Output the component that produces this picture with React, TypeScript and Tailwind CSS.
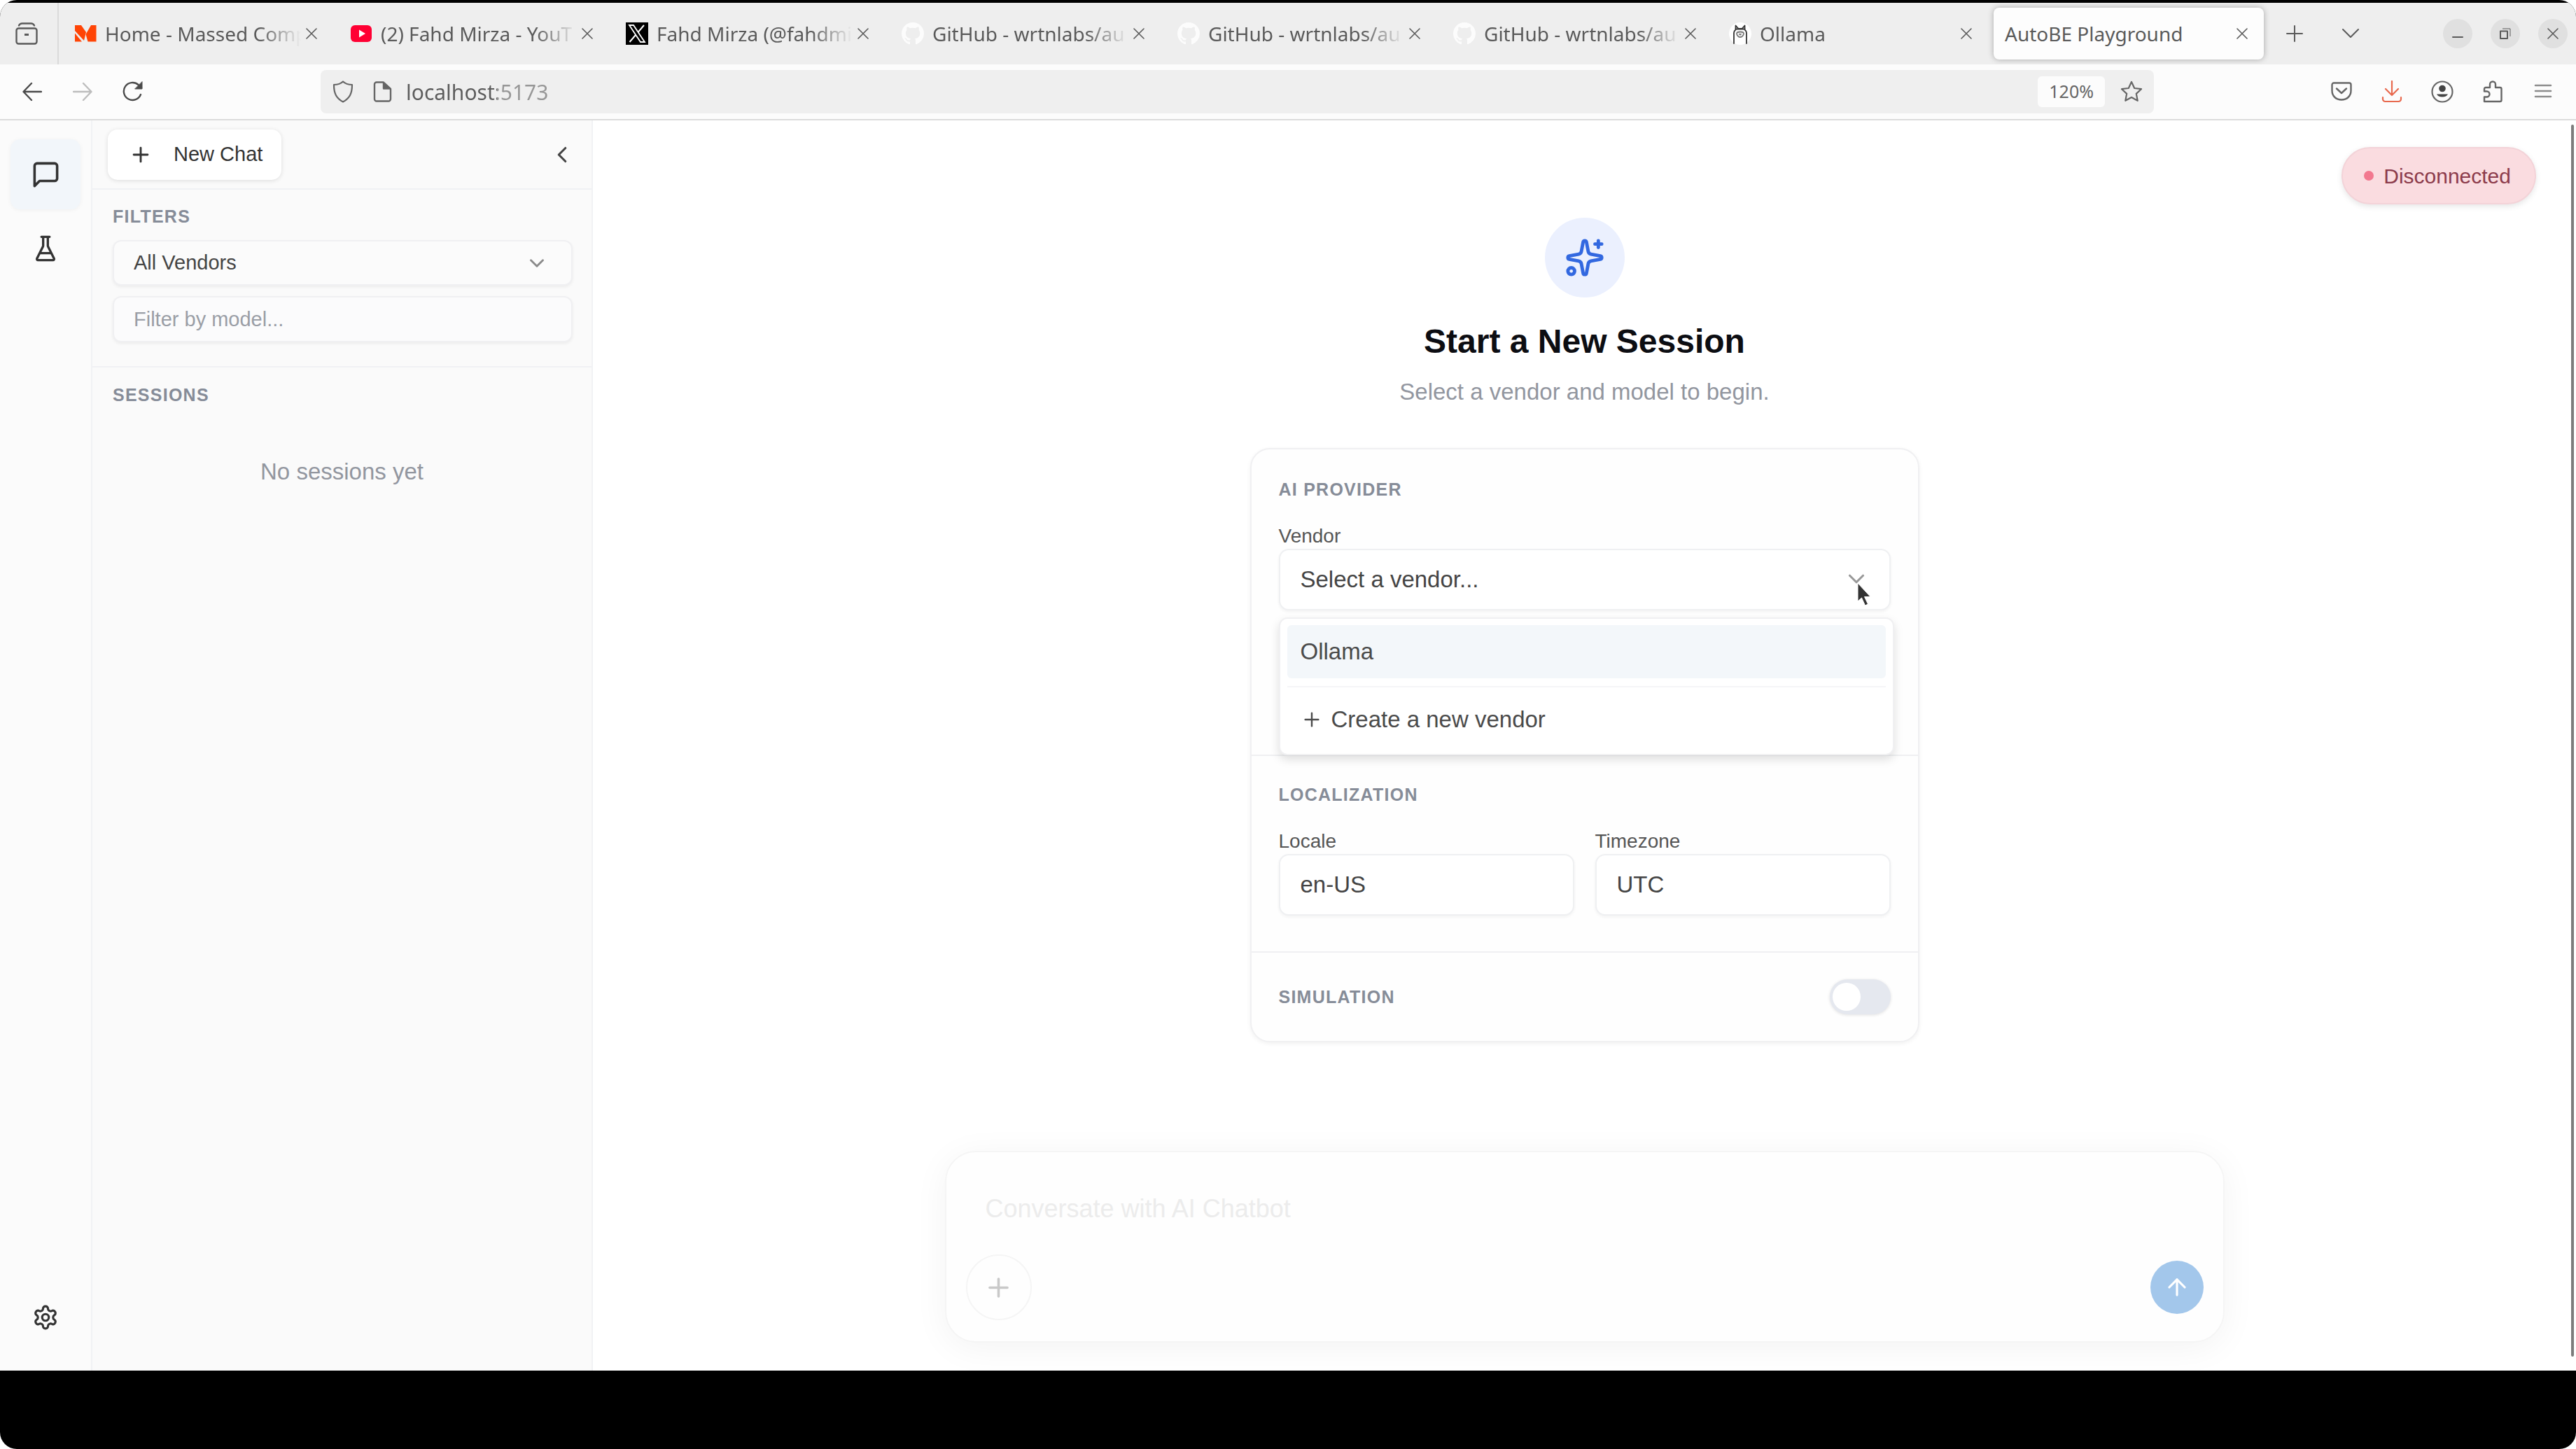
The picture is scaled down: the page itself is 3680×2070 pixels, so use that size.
import React, { useState } from "react";
import { ArrowUp, ChevronDown, ChevronLeft, Plus, Sparkles } from "lucide-react";

type IconProps = { className?: string };

const stroke = {
  fill: "none",
  stroke: "currentColor",
  strokeWidth: 2,
  strokeLinecap: "round" as const,
  strokeLinejoin: "round" as const,
};

function CloseIcon({ className = "" }: IconProps) {
  return (
    <svg viewBox="0 0 16 16" className={className} aria-hidden="true" {...stroke} strokeWidth={1.6}>
      <path d="M1 1l14 14M15 1L1 15" />
    </svg>
  );
}

function RecentIcon({ className = "" }: IconProps) {
  return (
    <svg viewBox="0 0 32 32" className={className} aria-hidden="true" {...stroke} strokeWidth={2.4}>
      <rect x="1.5" y="8.5" width="29" height="22" rx="3" />
      <path d="M5 4.500C6 2.500 7.500 1.500 9.500 1.500h13c2 0 3.500 1 4.500 3" />
      <path d="M13 17.500h6" strokeLinecap="butt" strokeWidth={3} />
    </svg>
  );
}

function MassedIcon({ className = "" }: IconProps) {
  return (
    <svg viewBox="0 0 32 24" className={className} aria-hidden="true" fill="#ff4405">
      <path d="M1 0h9l7 10-3 12L1 8z" />
      <path d="M1 11.500L11 23.500H1z" />
      <path d="M24 0h7.500v23.500H19.500L16.500 13z" />
    </svg>
  );
}

function YouTubeIcon({ className = "" }: IconProps) {
  return (
    <svg viewBox="0 0 32 24" className={className} aria-hidden="true">
      <rect x="1" y="0" width="30" height="24" rx="6" fill="#ff0033" />
      <path d="M13 6.500l9 5.500-9 5.500z" fill="#fff" />
    </svg>
  );
}

function XIcon({ className = "" }: IconProps) {
  return (
    <svg viewBox="0 0 32 32" className={className} aria-hidden="true">
      <rect width="32" height="32" fill="#000" />
      <path d="M5 4h6l16 24h-6z" fill="none" stroke="#fff" strokeWidth="1.800" />
      <path d="M26 4L17.500 14M14 18L5.500 28" stroke="#fff" strokeWidth="2" />
    </svg>
  );
}

function GitHubIcon({ className = "" }: IconProps) {
  return (
    <svg viewBox="0 0 16 16" className={className} aria-hidden="true">
      <path
        fill="#fcfcfc"
        d="M8 0C3.580 0 0 3.580 0 8c0 3.540 2.290 6.530 5.470 7.590.4.070.55-.17.55-.38 0-.19-.010-.82-.010-1.490-2.010.37-2.530-.49-2.690-.94-.09-.23-.48-.94-.82-1.130-.28-.15-.68-.52-.010-.53.63-.010 1.080.58 1.230.82.72 1.210 1.870.87 2.330.66.070-.52.28-.87.51-1.070-1.780-.2-3.640-.89-3.640-3.950 0-.87.31-1.590.82-2.150-.080-.2-.36-1.020.080-2.120 0 0 .67-.21 2.200.82.64-.18 1.320-.27 2-.27s1.360.09 2 .27c1.530-1.040 2.200-.82 2.200-.82.44 1.100.16 1.920.080 2.120.51.56.82 1.270.82 2.150 0 3.070-1.870 3.750-3.650 3.950.29.25.54.73.54 1.480 0 1.070-.010 1.930-.010 2.200 0 .21.15.46.55.38A8.010 8.010 0 0 0 16 8c0-4.420-3.580-8-8-8z"
      />
    </svg>
  );
}

function OllamaIcon({ className = "" }: IconProps) {
  return (
    <svg viewBox="0 0 32 32" className={className} aria-hidden="true">
      <circle cx="16" cy="16" r="16" fill="#fff" />
      <g fill="none" stroke="#333" strokeWidth="1.800" strokeLinecap="round" strokeLinejoin="round">
        <path d="M7 30V15c0-2 1-3.500 2.500-4.500V4.500l4 4.500h5l4-4.500v6C24 11.500 25 13 25 15v15" />
        <path d="M9.500 9.500h13" />
        <path d="M11 16c0-1.500 2-2.500 5-2.500s5 1 5 2.500-2 5-5 5-5-3.500-5-5z" stroke="#777" />
        <path d="M14.500 16.500h3L16 18z" stroke="#777" strokeWidth="1.200" />
      </g>
    </svg>
  );
}

const tabs = [
  { title: "Home - Massed Comp", Icon: MassedIcon },
  { title: "(2) Fahd Mirza - YouT", Icon: YouTubeIcon },
  { title: "Fahd Mirza (@fahdmi", Icon: XIcon },
  { title: "GitHub - wrtnlabs/au", Icon: GitHubIcon },
  { title: "GitHub - wrtnlabs/au", Icon: GitHubIcon },
  { title: "GitHub - wrtnlabs/au", Icon: GitHubIcon },
  { title: "Ollama", Icon: OllamaIcon },
];

function TabBar() {
  return (
    <div className="flex h-[88px] shrink-0 items-center bg-[#eeeeee] text-[#5a5a5a]">
      <button aria-label="Recent browsing" className="flex h-full w-[84px] shrink-0 items-center justify-center border-r-2 border-[#dadada] pr-[6px]">
        <RecentIcon className="size-8" />
      </button>
      <div className="flex min-w-0 items-center gap-2 pl-[6px]">
        {tabs.map(({ title, Icon }, i) => (
          <div key={i} className="flex h-[74px] w-[386px] min-w-0 items-center pr-[20px] pl-4">
            <Icon className="size-8 shrink-0" />
            <span className="ml-3 min-w-0 flex-1 whitespace-nowrap [mask-image:linear-gradient(to_right,black_calc(100%-60px),transparent)]">
              {title}
            </span>
            <button aria-label="Close tab" className="ml-1 flex size-[22px] shrink-0 items-center justify-center">
              <CloseIcon className="size-4" />
            </button>
          </div>
        ))}
        <div className="flex h-[74px] w-[386px] min-w-0 items-center rounded-[8px] bg-[#fdfdfd] pr-[20px] pl-4 shadow-[0_0_8px_rgba(0,0,0,0.3)]">
          <span className="min-w-0 flex-1 whitespace-nowrap">AutoBE Playground</span>
          <button aria-label="Close tab" className="flex size-[22px] items-center justify-center">
            <CloseIcon className="size-4" />
          </button>
        </div>
      </div>
      <button aria-label="New tab" className="ml-[28px] flex size-8 shrink-0 items-center justify-center">
        <svg viewBox="0 0 24 24" className="size-6" {...stroke}><path d="M12 1v22M1 12h22" /></svg>
      </button>
      <button aria-label="List all tabs" className="ml-12 flex size-8 shrink-0 items-center justify-center">
        <svg viewBox="0 0 24 24" className="size-6" {...stroke}><path d="M1 6l11 11L23 6" /></svg>
      </button>
      <div className="ml-auto flex gap-[26px] pr-[12px]">
        <button aria-label="Minimize" className="flex size-[42px] items-center justify-center rounded-full bg-[#e0e0e0]">
          <svg viewBox="0 0 16 16" className="size-4" {...stroke}><path d="M1 13h14" /></svg>
        </button>
        <button aria-label="Restore" className="flex size-[42px] items-center justify-center rounded-full bg-[#e0e0e0]">
          <svg viewBox="0 0 16 16" className="size-4" {...stroke} strokeLinecap="butt"><path d="M1 4.500h10V15H1z" /><path d="M4 1h11v11" strokeWidth={1} /></svg>
        </button>
        <button aria-label="Close window" className="flex size-[42px] items-center justify-center rounded-full bg-[#e0e0e0]">
          <CloseIcon className="size-4" />
        </button>
      </div>
    </div>
  );
}

function ToolBar() {
  return (
    <div className="flex h-[80px] shrink-0 items-center border-b-2 border-[#dcdcdc] bg-[#fcfcfc] text-[#666]">
      <button aria-label="Back" className="ml-[30px] size-8 p-[2px] text-[#4a4a4a]">
        <svg viewBox="0 0 28 28" {...stroke} strokeWidth={2.4}><path d="M13 2L1.500 14 13 26M2 14h25" /></svg>
      </button>
      <button aria-label="Forward" className="ml-10 size-8 p-[2px] text-[#bdbdbd]">
        <svg viewBox="0 0 28 28" {...stroke} strokeWidth={2.4}><path d="M15 2l11.500 12L15 26M26 14H1" /></svg>
      </button>
      <button aria-label="Reload" className="ml-10 size-8 p-px text-[#4a4a4a]">
        <svg viewBox="0 0 30 30" {...stroke} strokeWidth={2.4}><path d="M26 19A12.500 12.500 0 1 1 22.500 5L27 9" /><path d="M28 1v10H18z" fill="currentColor" strokeWidth={1} /></svg>
      </button>
      <div className="ml-[252px] flex h-[62px] w-[2619px] min-w-0 shrink items-center rounded-[8px] bg-[#efefef] pl-4">
        <svg viewBox="0 0 32 32" className="size-8 shrink-0" {...stroke} strokeWidth={2.2} aria-hidden="true">
          <path d="M16 1.500c3 3 8 4.500 13 4.500 0 12-3 19-13 24.500C6 25 3 18 3 6c5 0 10-1.500 13-4.500z" />
        </svg>
        <svg viewBox="0 0 32 32" className="ml-6 size-8 shrink-0" {...stroke} strokeWidth={2.4} aria-hidden="true">
          <path d="M8 2.500h9.500L28 12v14.500a3 3 0 0 1-3 3H8a3 3 0 0 1-3-3v-21a3 3 0 0 1 3-3z" />
          <path d="M18 3v8.500h9z" fill="currentColor" />
        </svg>
        <input
          aria-label="Address"
          defaultValue="localhost:5173"
          className="ml-[18px] h-full min-w-0 flex-1 bg-[linear-gradient(to_right,#5c5c5c_130px,#969696_130px)] bg-clip-text text-[30px] text-transparent caret-[#444] outline-none"
        />
        <button className="h-[44px] rounded-[6px] bg-[#fcfcfc] px-[16px] text-[25px]">120%</button>
        <button aria-label="Bookmark this page" className="mr-4 ml-[22px] size-8">
          <svg viewBox="0 0 32 32" {...stroke} strokeWidth={2.2}>
            <path d="M16 2l4.200 9 9.800 1.200-7.200 6.700 1.900 9.900L16 24l-8.700 4.800 1.900-9.900L2 12.200 11.800 11z" />
          </svg>
        </button>
      </div>
      <div className="ml-auto flex gap-10 pr-[31px]">
        <button aria-label="Save to Pocket" className="size-8">
          <svg viewBox="0 0 32 32" {...stroke} strokeWidth={2.4}>
            <path d="M5 3.500h22a2.500 2.500 0 0 1 2.500 2.500v8.500c0 8-6 13-13.500 13s-13.500-5-13.500-13V6A2.500 2.500 0 0 1 5 3.500z" />
            <path d="M9 11.500l7 6.500 7-6.500" />
          </svg>
        </button>
        <button aria-label="Downloads" className="size-8 text-[#e8694e]">
          <svg viewBox="0 0 32 32" {...stroke} strokeWidth={2.2}>
            <path d="M16 1v20M7 12l9 9 9-9M3 24v2.500A3.500 3.500 0 0 0 6.500 30h19a3.500 3.500 0 0 0 3.500-3.500V24" />
          </svg>
        </button>
        <button aria-label="Account" className="size-8">
          <svg viewBox="0 0 32 32" {...stroke} strokeWidth={2.2}>
            <circle cx="16" cy="16" r="14.500" />
            <circle cx="16" cy="11.500" r="4.800" fill="#444" stroke="none" />
            <path d="M8 19.500h16a8.500 6 0 0 1-16 0z" fill="#444" stroke="none" />
          </svg>
        </button>
        <button aria-label="Extensions" className="size-8">
          <svg viewBox="0 0 32 32" {...stroke} strokeWidth={2.4}>
            <path d="M4 30h22.500a2 2 0 0 0 2-2V12a2 2 0 0 0-2-2H20V5.500a4 4 0 0 0-8 0V10H6a2 2 0 0 0-2 2v3.500h3.500a4 4 0 0 1 0 8H4z" />
          </svg>
        </button>
        <button aria-label="Menu" className="size-8 text-[#8c8c8c]">
          <svg viewBox="0 0 32 32" {...stroke} strokeWidth={2.6}><path d="M5 7h22M5 15h22M5 23h22" /></svg>
        </button>
      </div>
    </div>
  );
}

function Rail() {
  return (
    <nav className="flex w-[132px] shrink-0 flex-col items-center border-r-2 border-[#f1f2f4] bg-[#fbfbfb] pt-[27px] pb-[28px] text-[#333]">
      <button aria-label="Chat" className="flex size-[100px] items-center justify-center rounded-[14px] bg-[#f2f6fa] shadow-[0_1px_6px_rgba(0,0,0,0.05)]">
        <svg viewBox="0 0 24 24" className="size-[43px]" {...stroke}>
          <path d="M21 15a2 2 0 0 1-2 2H7l-4 4V5a2 2 0 0 1 2-2h14a2 2 0 0 1 2 2z" />
        </svg>
      </button>
      <button aria-label="Experiments" className="mt-[6px] flex size-[100px] items-center justify-center">
        <svg viewBox="0 0 24 24" className="size-[40px]" {...stroke}>
          <path d="M10 2v7.500a2 2 0 0 1-.2.900L4.700 20.500a1 1 0 0 0 .9 1.500h12.800a1 1 0 0 0 .9-1.500L14.200 10.400a2 2 0 0 1-.2-.900V2M8.500 2h7M7 16h10" />
        </svg>
      </button>
      <button aria-label="Settings" className="mt-auto flex size-[96px] items-center justify-center">
        <svg viewBox="0 0 24 24" className="size-[38px]" {...stroke}>
          <path d="M12.220 2h-.44a2 2 0 0 0-2 2v.18a2 2 0 0 1-1 1.730l-.43.25a2 2 0 0 1-2 0l-.15-.080a2 2 0 0 0-2.730.73l-.22.38a2 2 0 0 0 .73 2.730l.15.100a2 2 0 0 1 1 1.720v.51a2 2 0 0 1-1 1.740l-.15.090a2 2 0 0 0-.73 2.730l.22.380a2 2 0 0 0 2.730.730l.15-.080a2 2 0 0 1 2 0l.430.250a2 2 0 0 1 1 1.730V20a2 2 0 0 0 2 2h.440a2 2 0 0 0 2-2v-.180a2 2 0 0 1 1-1.730l.430-.250a2 2 0 0 1 2 0l.150.080a2 2 0 0 0 2.730-.730l.220-.390a2 2 0 0 0-.730-2.730l-.150-.080a2 2 0 0 1-1-1.740v-.500a2 2 0 0 1 1-1.740l.150-.090a2 2 0 0 0 .730-2.730l-.220-.380a2 2 0 0 0-2.730-.730l-.150.080a2 2 0 0 1-2 0l-.430-.250a2 2 0 0 1-1-1.730V4a2 2 0 0 0-2-2z" />
          <circle cx="12" cy="12" r="3" />
        </svg>
      </button>
    </nav>
  );
}

const heading = "text-[25px] leading-8 font-bold tracking-wider uppercase text-[#868c98]";

function Sidebar() {
  return (
    <aside className="flex w-[715px] shrink-0 flex-col border-r-2 border-[#f1f2f4] bg-[#fafafa]">
      <div className="flex h-[99px] items-center justify-between border-b-2 border-[#f0f1f4] pr-[23px] pl-[22px]">
        <button className="flex h-[72px] items-center gap-[30px] rounded-[14px] bg-white pr-[27px] pl-[30px] text-[29px] text-[#333] shadow-[0_1px_6px_rgba(0,0,0,0.12)]">
          <Plus className="size-[34px]" />
          New Chat
        </button>
        <button aria-label="Collapse sidebar" className="text-[#444]"><ChevronLeft className="size-[38px]" /></button>
      </div>
      <div className="flex flex-col border-b-2 border-[#f0f1f4] pt-[22px] pr-[27px] pb-[34px] pl-[29px]">
        <h2 className={heading}>Filters</h2>
        <div className="relative mt-[18px]">
          <select aria-label="Vendor filter" className="h-[65px] w-full appearance-none rounded-[12px] border-2 border-[#f0f0f2] bg-[#fbfbfb] px-7 text-[29px] text-[#444] shadow-[0_2px_4px_rgba(0,0,0,0.06)]">
            <option>All Vendors</option>
          </select>
          <ChevronDown className="pointer-events-none absolute top-4 right-[34px] size-[34px] text-[#8a8a8a]" />
        </div>
        <input aria-label="Model filter" placeholder="Filter by model..." className="mt-[15px] h-[66px] rounded-[12px] border-2 border-[#f0f0f2] bg-[#fbfbfc] px-7 text-[29px] shadow-[0_2px_4px_rgba(0,0,0,0.06)] placeholder:text-[#9a9ea6]" />
      </div>
      <div className="flex flex-col px-[29px] pt-[23px]">
        <h2 className={heading}>Sessions</h2>
        <p className="mt-[72px] text-center text-[33px] leading-[44px] text-[#92969f]">No sessions yet</p>
      </div>
    </aside>
  );
}

const field =
  "h-[88px] w-full appearance-none rounded-[14px] border-2 border-[#eff0f2] bg-white px-[29px] text-[#444] shadow-[0_2px_4px_rgba(0,0,0,0.05)]";
const fieldLabel = "text-[28px] leading-9 text-[#555]";

function SessionCard() {
  const [simulation, setSimulation] = useState(false);
  return (
    <form className="mt-[58px] w-full max-w-[956px] rounded-[28px] border-2 border-[#f0f0f2] bg-[#fefefe] shadow-[0_2px_6px_rgba(0,0,0,0.06)]">
      <section className="flex h-[438px] flex-col border-b-2 border-[#eff0f2] px-[39px] pt-[41px]">
        <h2 className={heading}>AI Provider</h2>
        <label htmlFor="vendor" className={fieldLabel + " mt-[33px]"}>Vendor</label>
        <div className="relative">
          <select id="vendor" className={field + " text-[33px]"}>
            <option>Select a vendor...</option>
          </select>
          <ChevronDown className="pointer-events-none absolute top-6 right-[30px] size-[38px] text-[#999]" />
          <svg viewBox="0 0 20 34" className="pointer-events-none absolute top-[48px] right-[28px] z-20 h-[34px] w-5" aria-hidden="true">
            <path d="M1 1v26l5.500-5 5 11 4-2-5-10.500H19z" fill="#333" stroke="#fff" strokeWidth="1" />
          </svg>
          <div role="listbox" aria-label="Vendors" className="absolute top-[98px] left-0 z-10 h-[197px] w-[calc(100%+5px)] rounded-[12px] border-2 border-[#f0f0f2] bg-white px-[10px] pt-[9px] text-[33px] text-[#4a4a4a] shadow-[0_6px_14px_rgba(0,0,0,0.13)]">
            <button type="button" role="option" aria-selected="true" className="flex h-[76px] w-full items-center rounded-[6px] bg-[#f3f7fa] px-[19px]">
              Ollama
            </button>
            <hr className="mt-[11px] border-t-2 border-[#f5f5f7]" />
            <button type="button" role="option" aria-selected="false" className="mt-2 flex h-[76px] w-full items-center gap-[12px] px-[19px]">
              <Plus className="size-[32px]" strokeWidth={1.8} />
              Create a new vendor
            </button>
          </div>
        </div>
      </section>
      <section className="border-b-2 border-[#eff0f2] px-[39px] pt-[39px] pb-[51px]">
        <h2 className={heading}>Localization</h2>
        <div className="mt-[33px] grid grid-cols-2 gap-[30px]">
          <div className="flex flex-col">
            <label htmlFor="locale" className={fieldLabel}>Locale</label>
            <input id="locale" defaultValue="en-US" className={field + " text-[33px]"} />
          </div>
          <div className="flex flex-col">
            <label htmlFor="timezone" className={fieldLabel}>Timezone</label>
            <input id="timezone" defaultValue="UTC" className={field + " text-[33px]"} />
          </div>
        </div>
      </section>
      <section className="flex h-[126px] items-center justify-between px-[39px]">
        <h2 id="simulation-label" className={heading}>Simulation</h2>
        <label className="relative flex">
          <input
            type="checkbox"
            role="switch"
            aria-labelledby="simulation-label"
            checked={simulation}
            onChange={(e) => setSimulation(e.target.checked)}
            className="peer h-[50px] w-[87px] appearance-none rounded-full bg-[#e5e8ef] shadow-[0_1px_4px_rgba(0,0,0,0.12)] checked:bg-blue-500"
          />
          <span className="pointer-events-none absolute top-[5px] left-[4px] size-10 rounded-full bg-white peer-checked:left-[43px]" />
        </label>
      </section>
    </form>
  );
}

function Composer() {
  return (
    <div className="mb-[40px] flex h-[274px] w-full max-w-[1828px] flex-col rounded-[44px] border-2 border-[#f5f5f5] bg-[#fefefe] px-[28px] pt-[51px] shadow-[0_8px_50px_rgba(0,0,0,0.05)]">
      <textarea
        aria-label="Message"
        placeholder="Conversate with AI Chatbot"
        className="h-[60px] resize-none bg-transparent px-7 text-[36px] leading-[60px] outline-none placeholder:text-[#ececec]"
      />
      <div className="mt-[35px] flex items-center justify-between">
        <button aria-label="Add attachment" className="flex size-[94px] items-center justify-center rounded-full border-2 border-[#f5f5f5] text-[#c9c9c9]">
          <Plus className="size-[43px]" />
        </button>
        <button aria-label="Send" className="flex size-[76px] items-center justify-center rounded-full bg-[#a3c7eb] text-white">
          <ArrowUp className="size-[38px]" />
        </button>
      </div>
    </div>
  );
}

export default function App() {
  return (
    <div className="min-h-screen bg-white font-['Liberation_Sans',Arial,sans-serif]">
      <div className="flex h-screen flex-col overflow-hidden rounded-[24px] bg-black">
        <div className="flex flex-col pt-[4px] font-['Noto_Sans',sans-serif] text-[28px]">
          <TabBar />
          <ToolBar />
        </div>
        <div className="mb-[112px] flex min-h-0 flex-1 bg-white">
          <Rail />
          <Sidebar />
          <main className="relative flex min-w-0 flex-1 flex-col items-center justify-between overflow-hidden pt-[139px]">
            <div className="flex w-full flex-col items-center">
              <div className="flex size-[114px] items-center justify-center rounded-full bg-[#ebf0fe] text-[#3268e0]">
                <Sparkles className="size-[58px]" />
              </div>
              <h1 className="mt-[33px] text-[48px] leading-[60px] font-bold text-[#0c0d12]">Start a New Session</h1>
              <p className="mt-[20px] text-[33px] leading-[44px] text-[#92969f]">Select a vendor and model to begin.</p>
              <SessionCard />
            </div>
            <Composer />
            <div role="status" className="absolute top-[38px] right-[57px] flex h-[82px] items-center gap-[14px] rounded-full border-2 border-[#f3d3d8] bg-[#fadce0] pr-[34px] pl-[30px] text-[30px] text-[#8c3b4b] shadow-[0_3px_8px_rgba(0,0,0,0.1)]">
              <span className="size-[14px] rounded-full bg-[#f2788f]" />
              Disconnected
            </div>
            <div className="absolute top-[6px] right-[3px] h-[1760px] w-[4px] rounded-full bg-[#7c7c7c]" />
          </main>
        </div>
      </div>
    </div>
  );
}
